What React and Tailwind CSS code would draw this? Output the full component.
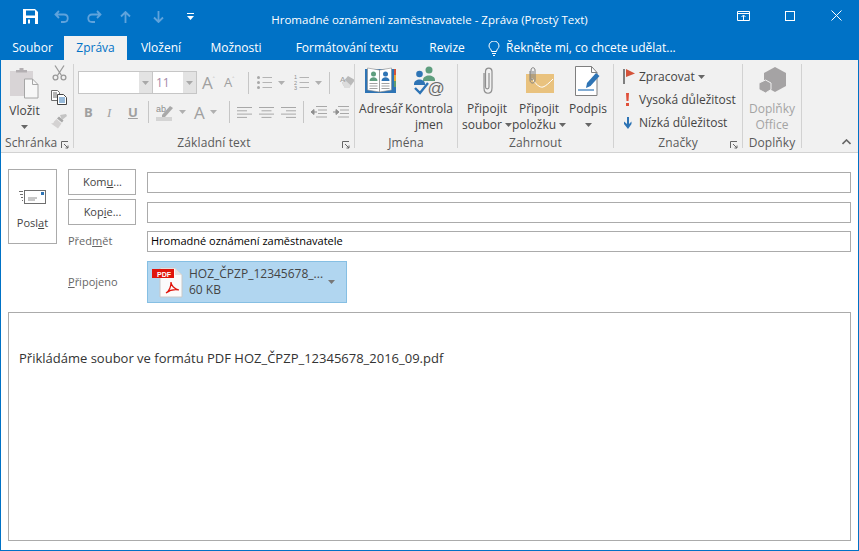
import React from "react";

const font = { };
const Caret = ({ c = "#666", className = "" }) => (
  <svg width="7" height="4" viewBox="0 0 7 4" className={className}><path d="M0 0h7L3.5 4z" fill={c} /></svg>
);
const Launcher = ({ c = "#666" }) => (
  <svg width="8" height="8" viewBox="0 0 8 8" fill="none" stroke={c} strokeWidth="1"><path d="M.5 7V.5H7" /><path d="M3 3l4 4M7 4.5V7H4.5" /></svg>
);
const Sep = ({ h = "h-[22px]" }) => <div className={`w-px ${h} bg-[#c6c6c6]`} />;
const GroupSep = () => <div className="w-px h-[84px] mt-1 bg-[#d2d2d2] shrink-0" />;

function Group({ w, label, launcher, children, disabledLabel }) {
  return (
    <div className={`${w} shrink-0 flex flex-col h-full`}>
      <div className="flex-1 min-h-0 flex">{children}</div>
      <div className="h-[18px] relative flex items-center justify-center text-[12px] leading-none text-[#5a5a5a] tracking-[0.1px]">
        {label}
        {launcher && <span className="absolute right-[4px] top-[7px] flex"><Launcher /></span>}
      </div>
    </div>
  );
}

const Lines = ({ kind }) => {
  const s = { l: [[0, 15], [0, 15], [0, 15], [0, 15]], };
  const rows = kind === "left" ? [[0, 15], [0, 10], [0, 15], [0, 10]] : kind === "center" ? [[0, 15], [2.5, 12.5], [0, 15], [2.5, 12.5]] : [[0, 15], [5, 15], [0, 15], [5, 15]];
  return (
    <svg width="15" height="13" viewBox="0 0 15 13" stroke="#a8a8a8" strokeWidth="1">
      {rows.map((r, i) => <path key={i} d={`M${r[0]} ${1.5 + i * 3.3}H${r[1]}`} />)}
    </svg>
  );
};

const Indent = ({ right }) => (
  <svg width="16" height="13" viewBox="0 0 16 13" fill="none">
    <path d="M5 .5h11M7 4h9M7 7.5h9M5 11h11" stroke="#a8a8a8" />
    <path d={right ? "M0 6h4M3 3.5l3 2.5-3 2.5z" : "M6 6H2M3 3.5L0 6l3 2.5z"} stroke="#8f8f8f" fill="#8f8f8f" />
  </svg>
);

const ListIcon = ({ numbered }) => (
  <svg width="15" height="15" viewBox="0 0 15 15">
    {numbered ? (
      <g fontSize="5.5" fontFamily="Liberation Sans" fill="#8f8f8f"><text x="0" y="4">1</text><text x="0" y="9.5">2</text><text x="0" y="15">3</text></g>
    ) : (
      <g fill="#a8a8a8"><rect x="0" y="1" width="3" height="3" rx="1.5" /><rect x="0" y="6" width="3" height="3" rx="1.5" /><rect x="0" y="11" width="3" height="3" rx="1.5" /></g>
    )}
    <path d="M5.5 2.5H15M5.5 7.5H15M5.5 12.5H15" stroke="#b4b4b4" />
  </svg>
);

const PasteIcon = () => (
  <svg width="30" height="32" viewBox="0 0 30 32">
    <rect x="0" y="3" width="23" height="25" fill="#d8d4d6" />
    <path d="M6 4V2h3.5V0h4v2H17v2.5H6z" fill="#b3afb2" />
    <path d="M14.5 11h8l5.5 5.5V30H14.5z" fill="#f7f7f7" stroke="#a6a6a6" />
    <path d="M22.5 11v5.5H28" fill="none" stroke="#a6a6a6" />
  </svg>
);
const Scissors = () => (
  <svg width="15" height="16" viewBox="0 0 15 16" fill="none" stroke="#9a9a9a" strokeWidth="1.3">
    <path d="M3 .5l6.5 10M12 .5L5.5 10.500" /><circle cx="3.500" cy="12.500" r="2.400" /><circle cx="11.500" cy="12.500" r="2.400" />
  </svg>
);
const CopyIcon = () => (
  <svg width="16" height="15" viewBox="0 0 16 15" fill="none">
    <path d="M.5.5h6l2 2v8H.5z" fill="#fff" stroke="#6d6d6d" />
    <path d="M2 3h4M2 5h4M2 7h4" stroke="#6d6d6d" />
    <path d="M6.500 4.500h6l3 3v7h-9z" fill="#fff" stroke="#444" />
    <path d="M8 8h6M8 10h6M8 12h6" stroke="#2e74b5" />
  </svg>
);
const Brush = () => (
  <svg width="16" height="15" viewBox="0 0 16 15">
    <path d="M9 1l6-1 1 2-5 4z" fill="#c4c4c4" />
    <path d="M8 2.500l4.500 4-1.500 2-5-4z" fill="#a8a8a8" />
    <path d="M5.500 5l5 4.500-3.500 5L0 9.500c2 0 3-1 3-2z" fill="#d4d2d2" />
  </svg>
);
const Eraser = () => (
  <svg width="16" height="17" viewBox="0 0 16 17">
    <path d="M3 9l6-7 7 4-6 8H6z" fill="#b9b9b9" />
    <path d="M3 9l3 5h4l2-2.500L6 6z" fill="#dcdcdc" />
    <text x="1" y="8" fontSize="8" fontFamily="Liberation Sans" fill="#9b9b9b">A</text>
  </svg>
);
const Highlighter = () => (
  <svg width="17" height="17" viewBox="0 0 17 17">
    <text x="0" y="8" fontSize="9" fontFamily="Liberation Sans" fill="#8f8f8f">ab</text>
    <path d="M6 11l8-9 3 2-8 9H6z" fill="#a9a9a9" />
    <rect x="0" y="13" width="16" height="4" fill="#d4d4d4" />
  </svg>
);
const AddressBook = () => (
  <svg width="32" height="28" viewBox="0 0 32 28">
    <rect x="28" y="2" width="3" height="6" fill="#d4533a" /><rect x="28" y="8" width="3" height="6" fill="#e9a93b" /><rect x="28" y="14" width="3" height="6" fill="#5f9e6e" />
    <rect x="28" y="20" width="3" height="6" fill="#2e74b5" />
    <path d="M0 2h29v24H0z" fill="#2e74b5" />
    <path d="M2.500 1l12 2v22l-12-2zM26.500 1l-12 2v22l12-2z" fill="#fff" stroke="#8a8a8a" strokeWidth=".6" />
    <circle cx="8.500" cy="7" r="2.500" fill="#5f9e7e" /><path d="M4.500 14c0-5 8-5 8 0z" fill="#5f9e7e" />
    <circle cx="20.500" cy="7" r="2.500" fill="#2e74b5" /><path d="M16.500 14c0-5 8-5 8 0z" fill="#2e74b5" />
    <path d="M4.500 16.500h8M4.500 19h8M4.500 21.500h8M16.500 16.500h8M16.500 19h8M16.500 21.500h8" stroke="#8a8a8a" strokeWidth=".8" />
  </svg>
);
const CheckNames = () => (
  <svg width="32" height="30" viewBox="0 0 32 30" fill="none">
    <circle cx="16" cy="4" r="3.500" fill="#5f9e7e" /><path d="M10 14c0-6 12-6 12 0v1H10z" fill="#5f9e7e" />
    <circle cx="6.500" cy="8" r="3.300" fill="#2e74b5" /><path d="M1 18c0-6 11-6 11 0v1H1z" fill="#2e74b5" />
    <path d="M2 22l5 5 8-10" stroke="#2e74b5" strokeWidth="2.400" />
    <text x="14.500" y="28" fontSize="17" fontFamily="Liberation Sans" fill="#6b6b6b">@</text>
  </svg>
);
const Clip = () => (
  <svg width="12" height="28" viewBox="0 0 12 28" fill="none" stroke="#8f8f8f" strokeWidth="1.200">
    <path d="M3 6v15c0 7 8 7 8 0V4.500C11 0 4.500 0 4.500 4.500V20c0 2.500 3.500 2.500 3.500 0V6" />
  </svg>
);
const AttachItem = () => (
  <svg width="30" height="27" viewBox="0 0 30 27" fill="none">
    <rect x="2" y="7" width="28" height="19" fill="#e9c27e" />
    <path d="M8 11c3 6 8 10 11 9s6-4 10-8" stroke="#fff" strokeWidth="1" />
    <path d="M6 4v9c0 4 5 4 5 0V3C11 0 7 0 7 3v9c0 1.500 2 1.500 2 0V4" stroke="#7f7f7f" fill="none" strokeWidth="1" />
  </svg>
);
const Signature = () => (
  <svg width="26" height="30" viewBox="0 0 26 30" fill="none">
    <path d="M.5.500h16l5.500 6V29.500H.5z" fill="#fff" stroke="#7f7f7f" />
    <path d="M16.500.5v6H22" stroke="#7f7f7f" />
    <path d="M12 17l9-10 3.500 3-9 10-4.500 2z" fill="#2e74b5" />
    <path d="M3 24h16" stroke="#2e74b5" strokeWidth="1.200" />
  </svg>
);
const Hex = () => (
  <svg width="27" height="27" viewBox="0 0 27 27">
    <path d="M16 0l11 6v13l-11 6-11-6V6z" fill="#a5a3a4" />
    <path d="M6.500 13l5.500 3v6.500L6.500 26 0 22.500V16z" fill="#a5a3a4" stroke="#f1f1f1" />
  </svg>
);

const BigBtn = ({ w, icon, h = "h-[40px]", l1, l2, caret1, caretBelow, gray, iconAlign = "items-center" }) => (
  <div className={`${w} flex flex-col items-center shrink-0`}>
    <div className={`${h} flex ${iconAlign} justify-center w-full`}>{icon}</div>
    <div className={`text-[12px] leading-[16px] whitespace-nowrap ${gray ? "text-[#a4a4a4]" : "text-[#444]"}`}>{l1}</div>
    {l2 && (
      <div className={`text-[12px] leading-[16px] whitespace-nowrap flex items-center gap-[3px] ${gray ? "text-[#a4a4a4]" : "text-[#444]"}`}>
        {l2}{caret1 && <Caret />}
      </div>
    )}
    {caretBelow && <div className="h-[16px] flex items-center"><Caret /></div>}
  </div>
);

const Tab = ({ children, active, w }) => (
  <div className={`${w} shrink-0 h-[24px] flex items-center justify-center text-[12px] ${active ? "bg-[#f1f1f1] text-[#0072c6]" : "text-white"}`}>{children}</div>
);

const Input = ({ children, h = "h-[21px]" }) => (
  <div className={`flex-1 ${h} border border-[#ababab] bg-white flex items-center px-[3px] text-[11px] text-black`}>{children}</div>
);
const AddrBtn = ({ children }) => (
  <div className="w-[68px] h-[26px] border border-[#ababab] flex items-center justify-center text-[11px] text-[#444] pl-[1px]">{children}</div>
);

export default function App() {
  return (
    <div className="w-[859px] h-[551px] bg-white border-x border-b border-[#0072c6] flex flex-col overflow-hidden" style={{ fontFamily: '"Open Sans", "Noto Sans", sans-serif' }}>
      {/* title bar */}
      <div className="h-[36px] bg-[#0072c6] flex items-center shrink-0 relative text-white">
        <div className="flex items-center pl-[22px] gap-[16px] -mt-[3px]">
          <svg width="15" height="15" viewBox="0 0 15 15"><path d="M0 0h12l3 3v12H0z" fill="#fff" /><rect x="3" y="1.500" width="9" height="5" fill="#0072c6" /><rect x="3" y="9" width="9" height="6" fill="#0072c6" /><rect x="5" y="10.500" width="2" height="4" fill="#fff" /></svg>
          <svg width="16" height="14" viewBox="0 0 16 14" fill="none" stroke="#5fa3dc" strokeWidth="1.800"><path d="M5 1L1.500 4.500 5 8M2 4.500h8c5 0 5 7.500 0 7.500H7" /></svg>
          <svg width="16" height="14" viewBox="0 0 16 14" fill="none" stroke="#5fa3dc" strokeWidth="1.800"><path d="M11 1l3.500 3.500L11 8M14 4.500H6c-5 0-5 7.500 0 7.500h3" /></svg>
          <svg width="11" height="12" viewBox="0 0 11 12" fill="none" stroke="#5fa3dc" strokeWidth="1.800" className="ml-[2px]"><path d="M1 5.500L5.500 1 10 5.500M5.500 1v11" /></svg>
          <svg width="11" height="12" viewBox="0 0 11 12" fill="none" stroke="#5fa3dc" strokeWidth="1.800" className="ml-[6px]"><path d="M1 6.500L5.500 11 10 6.500M5.500 11V0" /></svg>
          <svg width="7" height="7" viewBox="0 0 7 7" className="ml-[7px]"><path d="M0 0h7v1H0zM0 3h7L3.500 7z" fill="#fff" /></svg>
        </div>
        <div className="absolute left-0 right-0 top-[12px] text-center text-[11.500px] leading-[16px] pr-[-1px]">Hromadné oznámení zaměstnavatele - Zpráva (Prostý Text)</div>
        <div className="ml-auto flex items-center -mt-[5px] pr-[16px]">
          <svg width="13" height="10" viewBox="0 0 13 10" fill="none" stroke="#fff"><path d="M.5.500h12v9H.5zM.5 2.500h12M6.500 9V4.500M4.500 6l2-2 2 2" /></svg>
          <svg width="10" height="10" viewBox="0 0 10 10" fill="none" stroke="#fff" className="ml-[35px]"><rect x=".5" y=".5" width="9" height="9" /></svg>
          <svg width="11" height="11" viewBox="0 0 11 11" fill="none" stroke="#fff" className="ml-[36px]"><path d="M.5.500l10 10M10.500.500l-10 10" /></svg>
        </div>
      </div>
      {/* tabs */}
      <div className="h-[24px] bg-[#0072c6] flex shrink-0 items-end">
        <Tab w="w-[63px]">Soubor</Tab>
        <Tab w="w-[63px]" active>Zpráva</Tab>
        <Tab w="w-[68px]">Vložení</Tab>
        <Tab w="w-[82px]">Možnosti</Tab>
        <Tab w="w-[140px]">Formátování textu</Tab>
        <Tab w="w-[60px]">Revize</Tab>
        <div className="h-[24px] ml-[11px] flex items-center gap-[6px] text-[12px] text-white">
          <svg width="12" height="15" viewBox="0 0 12 15" fill="none" stroke="#fff"><path d="M3.500 10.500C3.500 8 1 7.500 1 5a5 5 0 0110 0c0 2.500-2.500 3-2.500 5.500zM4 12.500h4M5 14.500h2" /></svg>
          Řekněte mi, co chcete udělat...
        </div>
      </div>
      {/* ribbon */}
      <div className="h-[93px] bg-[#f1f1f1] border-b border-[#d2d2d2] flex shrink-0 relative">
        <Group w="w-[72px]" label={<span className="absolute left-[4px]">Schránka</span>} launcher>
          <div className="w-[47px] flex flex-col items-center pt-[8px]">
            <PasteIcon />
            <div className="text-[12px] leading-[16px] text-[#444] mt-[3px]">Vložit</div>
            <Caret className="mt-[6px]" />
          </div>
          <div className="flex flex-col items-center gap-[9px] pt-[5px] pl-[3px]">
            <Scissors /><CopyIcon /><Brush />
          </div>
        </Group>
        <GroupSep />
        <Group w="w-[280px]" label="Základní text" launcher>
          <div className="flex flex-col pl-[4px] pt-[11px]">
            <div className="flex items-center h-[23px]">
              <div className="w-[75px] h-[23px] border border-[#c6c6c6] bg-white flex justify-end">
                <div className="w-[13px] bg-[#e3e3e3] flex items-center justify-center"><Caret c="#a8a8a8" /></div>
              </div>
              <div className="w-[44px] h-[23px] border border-l-0 border-[#c6c6c6] bg-white flex items-center justify-between pl-[3px] text-[12px] text-[#a58aa8]">
                11
                <div className="w-[13px] h-full bg-[#e3e3e3] flex items-center justify-center"><Caret c="#a8a8a8" /></div>
              </div>
              <div className="w-[19px] ml-[5px] text-[17px] text-[#a0a0a0] leading-none">A<span className="text-[7px] align-super">˄</span></div>
              <div className="w-[16px] ml-[3px] text-[13px] text-[#a0a0a0] leading-none">A<span className="text-[7px] align-super">˄</span></div>
              <div className="ml-[8px]"><Sep /></div>
              <div className="ml-[8px] flex items-center gap-[6px]"><ListIcon /><Caret c="#b0b0b0" /></div>
              <div className="ml-[9px] flex items-center gap-[6px]"><ListIcon numbered /><Caret c="#b0b0b0" /></div>
              <div className="ml-[7px]"><Sep /></div>
              <div className="ml-[9px]"><Eraser /></div>
            </div>
            <div className="flex items-center h-[24px] mt-[6px]">
              <span className="w-[9px] ml-[6px] text-[13px] font-bold text-[#a0a0a0] leading-none">B</span>
              <span className="w-[8px] ml-[14px] text-[13px] italic text-[#a0a0a0] leading-none" style={{ fontFamily: '"Liberation Serif", serif' }}>I</span>
              <span className="w-[10px] ml-[13px] text-[13px] font-bold underline text-[#a0a0a0] leading-none">U</span>
              <div className="ml-[10px]"><Sep /></div>
              <div className="ml-[7px] flex items-center gap-[6px]"><Highlighter /><Caret c="#b0b0b0" /></div>
              <span className="ml-[8px] text-[17px] text-[#a0a0a0] leading-none">A</span>
              <Caret c="#b0b0b0" className="ml-[5px]" />
              <div className="ml-[12px]"><Sep /></div>
              <div className="ml-[7px] flex gap-[7px]"><Lines kind="left" /><Lines kind="center" /><Lines kind="right" /></div>
              <div className="ml-[7px]"><Sep /></div>
              <div className="ml-[7px] flex gap-[6px]"><Indent /><Indent right /></div>
            </div>
          </div>
        </Group>
        <GroupSep />
        <Group w="w-[102px]" label="Jména">
          <div className="flex pl-[3px]">
            <BigBtn w="w-[46px]" icon={<AddressBook />} h="h-[41px]" l1="Adresář" />
            <BigBtn w="w-[50px]" icon={<CheckNames />} h="h-[41px]" l1="Kontrola" l2="jmen" />
          </div>
        </Group>
        <GroupSep />
        <Group w="w-[155px]" label="Zahrnout">
          <div className="flex pl-[3px]">
            <BigBtn w="w-[52px]" icon={<Clip />} h="h-[41px]" l1="Připojit" l2="soubor" caret1 />
            <BigBtn w="w-[52px]" icon={<AttachItem />} h="h-[41px]" l1="Připojit" l2="položku" caret1 />
            <BigBtn w="w-[46px]" icon={<Signature />} h="h-[41px]" l1="Podpis" caretBelow />
          </div>
        </Group>
        <GroupSep />
        <Group w="w-[128px]" label="Značky" launcher>
          <div className="flex flex-col text-[12px] text-[#444] pl-[9px] pt-[5px]">
            <div className="h-[23px] flex items-center">
              <svg width="14" height="15" viewBox="0 0 14 15"><rect x="0" y="0" width="2" height="15" fill="#7f7f7f" /><path d="M3 0l9 4.500L3 8z" fill="#d4533a" /></svg>
              <span className="ml-[2px]">Zpracovat</span><Caret className="ml-[3px]" />
            </div>
            <div className="h-[23px] flex items-center">
              <svg width="14" height="13" viewBox="0 0 14 13" className="mr-[2px]"><path d="M3 0h3l-.5 8h-2z" fill="#e0503a" /><rect x="3" y="10" width="3" height="3" fill="#e0503a" /></svg>
              Vysoká důležitost
            </div>
            <div className="h-[23px] flex items-center">
              <svg width="14" height="12" viewBox="0 0 14 12" className="mr-[2px]"><path d="M4 0h2v7l2.500-2.500v2.500L5 12 1 7V4.500L4 7z" fill="#2e74b5" /></svg>
              Nízká důležitost
            </div>
          </div>
        </Group>
        <GroupSep />
        <Group w="w-[58px]" label="Doplňky">
          <div className="w-full">
            <BigBtn w="w-full" gray icon={<Hex />} h="h-[41px]" l1="Doplňky" l2="Office" />
          </div>
        </Group>
        <GroupSep />
        <div className="absolute right-[7px] bottom-[7px]">
          <svg width="9" height="6" viewBox="0 0 9 6" fill="none" stroke="#666" strokeWidth="1.600"><path d="M.5 5l4-4 4 4" /></svg>
        </div>
      </div>
      {/* compose */}
      <div className="flex-1 min-h-0 flex flex-col px-[7px] pb-[9px]">
        <div className="flex mt-[16px] gap-[11px]">
          <div className="w-[49px] h-[75px] border border-[#ababab] flex flex-col items-center shrink-0 pt-[20px]">
            <svg width="27" height="14" viewBox="0 0 27 14" fill="none">
              <path d="M0 1.500h4M1 4.500h3M2 7.500h2M3 10.500h1" stroke="#6f6f6f" />
              <rect x="5.500" y=".5" width="21" height="13" fill="#fff" stroke="#6f6f6f" />
              <rect x="22" y="2" width="3" height="3" fill="#2e74b5" />
              <path d="M9 9h9M9 11h7" stroke="#8f8f8f" transform="translate(0 -1)" />
            </svg>
            <div className="text-[11px] leading-[16px] text-[#444] mt-[11px]">Posl<u>a</u>t</div>
          </div>
          <div className="flex-1 flex flex-col">
            <div className="flex items-center h-[26px] gap-[11px]"><AddrBtn>Kom<u>u</u>...</AddrBtn><Input /></div>
            <div className="flex items-center h-[26px] gap-[11px] mt-[4px]"><AddrBtn>Kop<u>i</u>e...</AddrBtn><Input /></div>
            <div className="flex items-center h-[21px] gap-[11px] mt-[6px]">
              <div className="w-[68px] text-[11px] text-[#666]">Před<u>m</u>ět</div>
              <Input>Hromadné oznámení zaměstnavatele</Input>
            </div>
            <div className="flex items-center gap-[11px] mt-[9px]">
              <div className="w-[68px] text-[11px] text-[#666]"><u>P</u>řipojeno</div>
              <div className="w-[200px] h-[42px] bg-[#b1d6f0] border border-[#86bfe3] flex items-center pl-[4px]">
                <svg width="31" height="31" viewBox="0 0 31 31" className="shrink-0">
                  <path d="M8 1h15l7 7v22H8z" fill="#fbfbfb" stroke="#c8c8c8" />
                  <path d="M23 1v7h7" fill="#e3e3e3" />
                  <rect x="0" y="2" width="22" height="9" fill="#e0140b" />
                  <text x="5" y="9.500" fontSize="7" fontWeight="700" fontFamily="Liberation Sans" fill="#fff">PDF</text>
                  <path d="M14 26c3-2 5-6 5-11 0 3 3 7 8 8-5-1-9 0-13 3z" fill="none" stroke="#e0140b" strokeWidth="1.200" />
                </svg>
                <div className="ml-[6px] w-[127px] text-[12px] leading-[16px] text-[#444]">
                  <div className="whitespace-nowrap">HOZ_ČPZP_12345678_...</div>
                  <div>60 KB</div>
                </div>
                <Caret c="#777" className="ml-[12px]" />
              </div>
            </div>
          </div>
        </div>
        <div className="flex-1 mt-[9px] border border-[#ababab] pl-[10px] pt-[35px] text-[13px] leading-[20px] text-[#333]">
          Přikládáme soubor ve formátu PDF HOZ_ČPZP_12345678_2016_09.pdf
        </div>
      </div>
    </div>
  );
}
